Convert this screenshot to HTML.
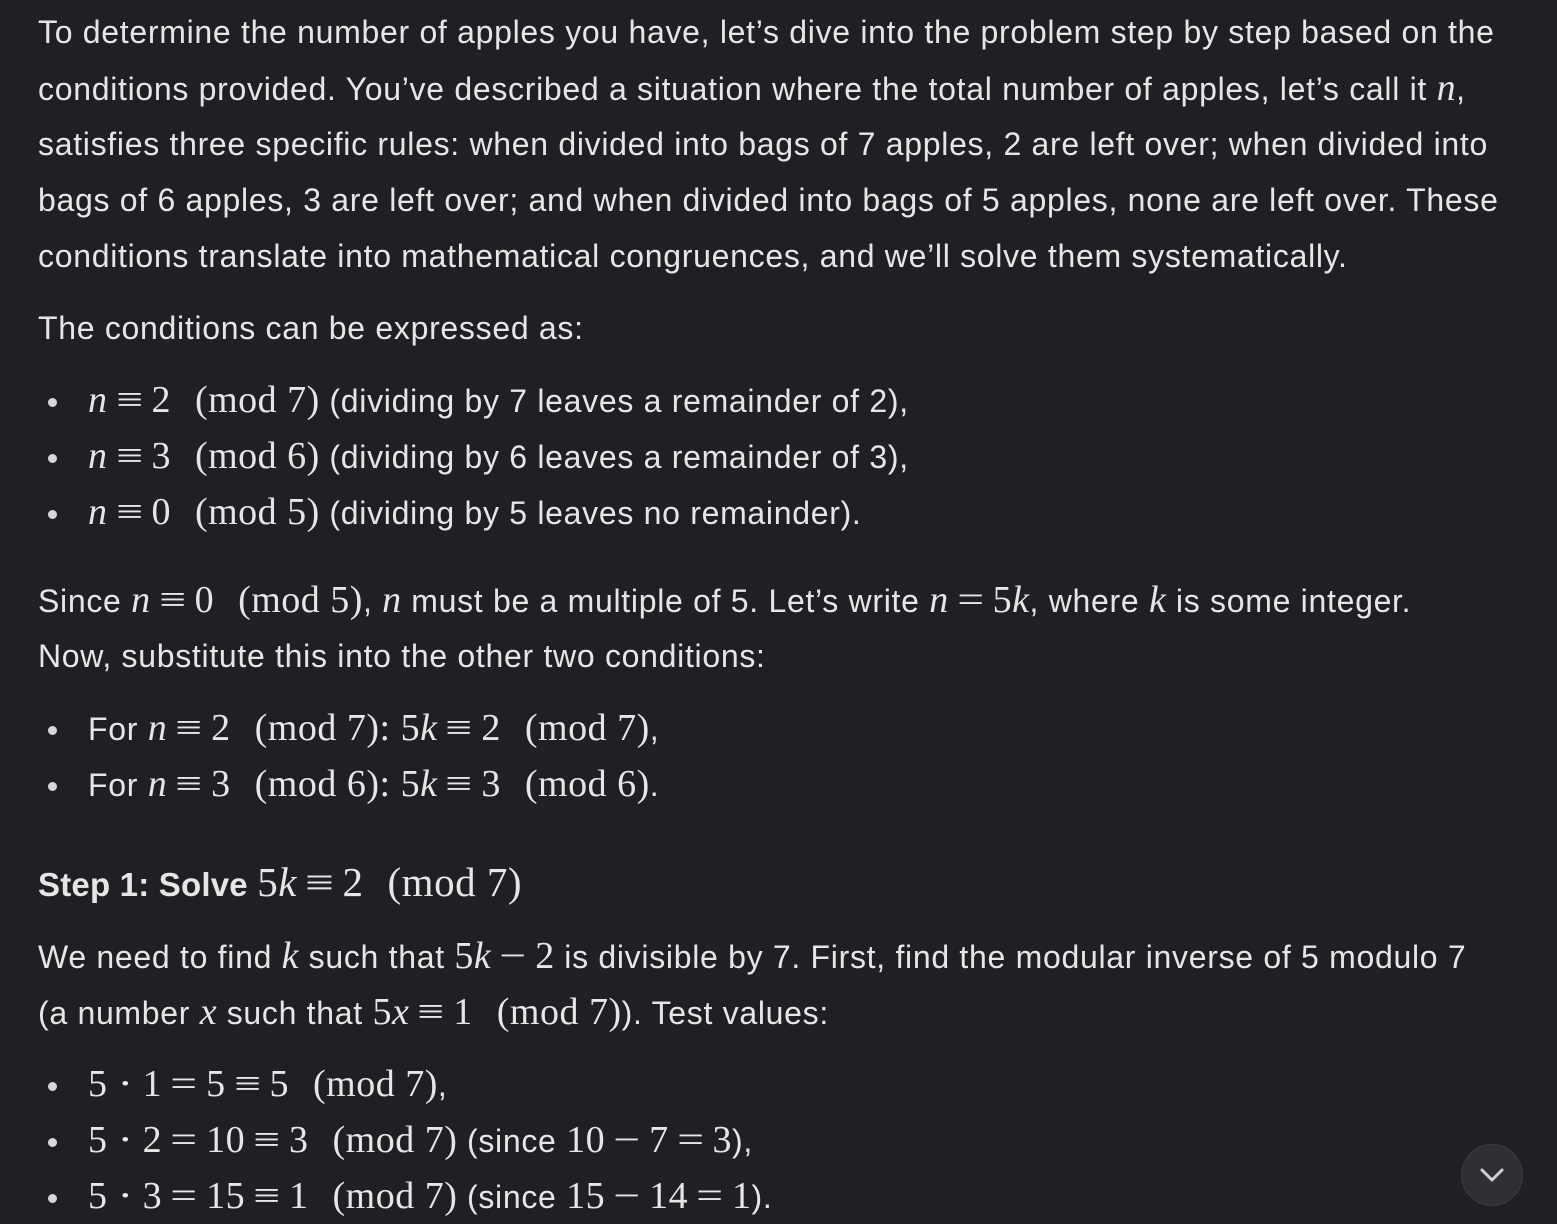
<!DOCTYPE html>
<html><head><meta charset="utf-8"><style>
html,body{margin:0;padding:0;background:#1f2023;width:1557px;height:1224px;overflow:hidden}
body{font-family:"Liberation Sans",sans-serif;color:#e6e6e6;font-size:32px;position:relative}
.l{position:absolute;left:38px;height:56px;line-height:56px;white-space:nowrap;letter-spacing:0.7px}
.b{left:88px}
.b::before{content:"";position:absolute;left:-40px;top:26px;width:9px;height:9px;border-radius:50%;background:#d8d8d8}
.m{font-family:"Liberation Serif",serif;font-size:38px;letter-spacing:0.5px}
.r{margin:0 11px;display:inline-block;transform:scaleX(1.25)}
.p{margin-left:24px}
.i{font-style:italic}
.h{font-weight:bold}
.btn{position:absolute;left:1461px;top:1144px;width:62px;height:62px;border-radius:50%;background:#2f3033;border:1px solid #3a3b3e;box-sizing:border-box}
</style></head><body>
<div class="l" style="top:4px">To determine the number of apples you have, let’s dive into the problem step by step based on the</div>
<div class="l" style="top:60px">conditions provided. You’ve described a situation where the total number of apples, let’s call it <span class="m i">n</span>,</div>
<div class="l" style="top:116px">satisfies three specific rules: when divided into bags of 7 apples, 2 are left over; when divided into</div>
<div class="l" style="top:172px">bags of 6 apples, 3 are left over; and when divided into bags of 5 apples, none are left over. These</div>
<div class="l" style="top:228px">conditions translate into mathematical congruences, and we’ll solve them systematically.</div>
<div class="l" style="top:300px">The conditions can be expressed as:</div>
<div class="l b" style="top:372px"><span class="m"><i>n</i><span class="r">≡</span>2<span class="p">(mod 7)</span></span> (dividing by 7 leaves a remainder of 2),</div>
<div class="l b" style="top:428px"><span class="m"><i>n</i><span class="r">≡</span>3<span class="p">(mod 6)</span></span> (dividing by 6 leaves a remainder of 3),</div>
<div class="l b" style="top:484px"><span class="m"><i>n</i><span class="r">≡</span>0<span class="p">(mod 5)</span></span> (dividing by 5 leaves no remainder).</div>
<div class="l" style="top:572px">Since <span class="m"><i>n</i><span class="r">≡</span>0<span class="p">(mod 5)</span></span>, <span class="m i">n</span> must be a multiple of 5. Let’s write <span class="m"><i>n</i><span class="r">=</span>5<i>k</i></span>, where <span class="m i">k</span> is some integer.</div>
<div class="l" style="top:628px">Now, substitute this into the other two conditions:</div>
<div class="l b" style="top:700px">For <span class="m"><i>n</i><span class="r">≡</span>2<span class="p">(mod 7)</span>: 5<i>k</i><span class="r">≡</span>2<span class="p">(mod 7)</span></span>,</div>
<div class="l b" style="top:756px">For <span class="m"><i>n</i><span class="r">≡</span>3<span class="p">(mod 6)</span>: 5<i>k</i><span class="r">≡</span>3<span class="p">(mod 6)</span></span>.</div>
<div class="l h" style="top:854px;font-size:33px;letter-spacing:0.2px">Step 1: Solve <span class="m" style="font-weight:normal;font-size:41px">5<i>k</i><span class="r">≡</span>2<span class="p">(mod 7)</span></span></div>
<div class="l" style="top:928px">We need to find <span class="m i">k</span> such that <span class="m">5<i>k</i><span class="r">−</span>2</span> is divisible by 7. First, find the modular inverse of 5 modulo 7</div>
<div class="l" style="top:984px">(a number <span class="m i">x</span> such that <span class="m">5<i>x</i><span class="r">≡</span>1<span class="p">(mod 7)</span></span>). Test values:</div>
<div class="l b" style="top:1056px"><span class="m">5<span class="r">·</span>1<span class="r">=</span>5<span class="r">≡</span>5<span class="p">(mod 7)</span></span>,</div>
<div class="l b" style="top:1112px"><span class="m">5<span class="r">·</span>2<span class="r">=</span>10<span class="r">≡</span>3<span class="p">(mod 7)</span></span> (since <span class="m">10<span class="r">−</span>7<span class="r">=</span>3</span>),</div>
<div class="l b" style="top:1168px"><span class="m">5<span class="r">·</span>3<span class="r">=</span>15<span class="r">≡</span>1<span class="p">(mod 7)</span></span> (since <span class="m">15<span class="r">−</span>14<span class="r">=</span>1</span>).</div>
<div class="btn"><svg width="62" height="62" viewBox="0 0 62 62" style="position:absolute;left:-1px;top:-1px"><path d="M21 26 L31 36 L41 26" fill="none" stroke="#d0d0d0" stroke-width="3" stroke-linecap="round" stroke-linejoin="round"/></svg></div>
</body></html>
